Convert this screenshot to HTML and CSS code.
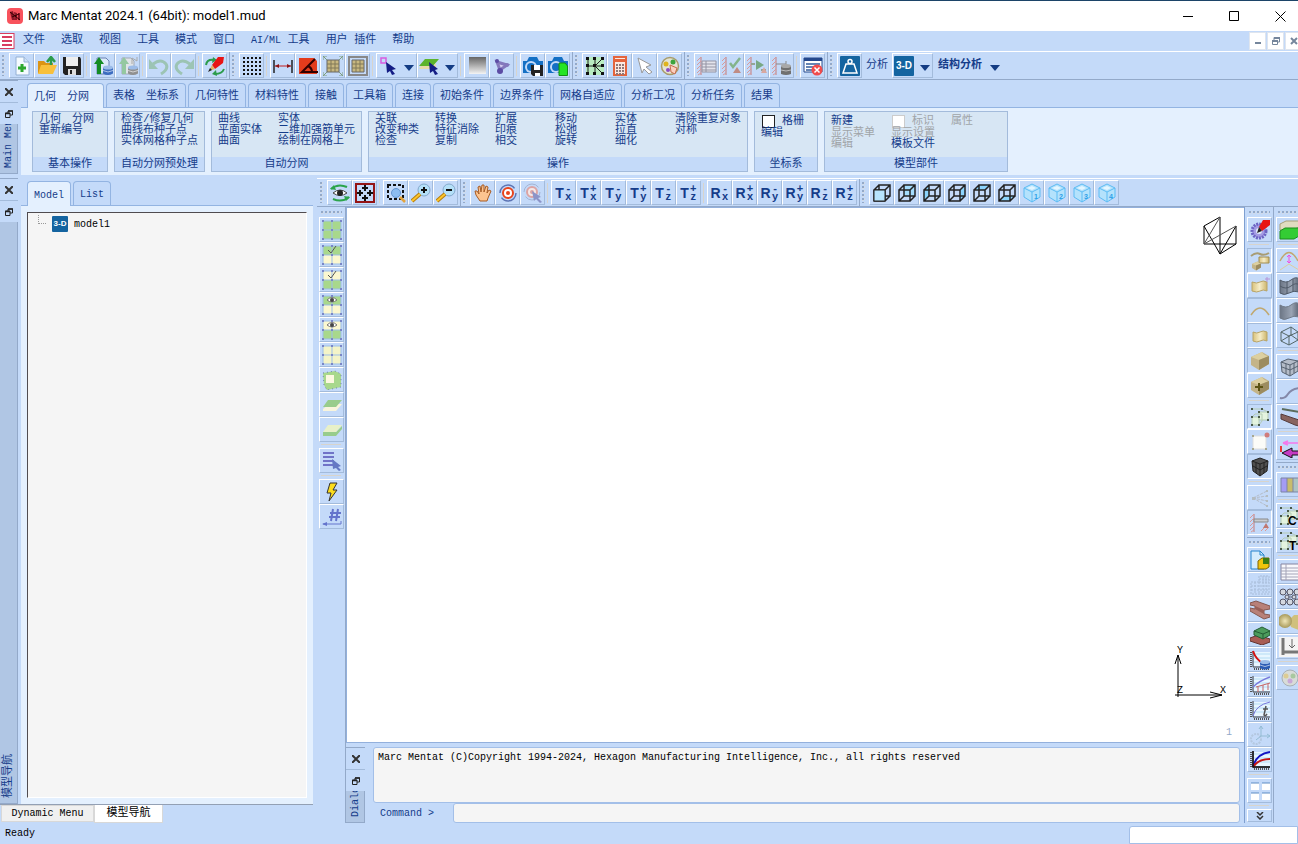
FILE: index.html
```
<!DOCTYPE html>
<html lang="zh-CN">
<head>
    <meta charset="UTF-8">
    <meta name="viewport" content="width=device-width, initial-scale=1.0">
    <title>Marc Mentat 2024.1 (64bit): model1.mud</title>
    <link rel="stylesheet" href="styles.css">
</head>
<body>
    <!-- shared icon shapes -->
    <svg class="defs" aria-hidden="true">
        <defs>
            <linearGradient id="g-grey" x1="0" y1="0" x2="0" y2="1"><stop offset="0" stop-color="#666"/><stop offset="1" stop-color="#f4f4f4"/></linearGradient>
            <linearGradient id="g-tan" x1="0" y1="0" x2="1" y2="0"><stop offset="0" stop-color="#d9c27c"/><stop offset=".5" stop-color="#f6edc8"/><stop offset="1" stop-color="#cdb56c"/></linearGradient>
            <linearGradient id="g-steel" x1="0" y1="0" x2="1" y2="0"><stop offset="0" stop-color="#6c7686"/><stop offset=".6" stop-color="#9aa4b4"/><stop offset="1" stop-color="#5c6676"/></linearGradient>
            <radialGradient id="g-ball"><stop offset="0" stop-color="#f0e6b8"/><stop offset="1" stop-color="#a89a5c"/></radialGradient>
        </defs>
        <symbol id="nodes" viewBox="0 0 20 20">
            <path d="M1 1H19V19H1ZM10 1V19M1 10H19" fill="none" stroke="#9dbfe6"/>
            <path d="M0 0h2v2H0zM9 0h2v2H9zM18 0h2v2h-2zM0 9h2v2H0zM9 9h2v2H9zM18 9h2v2h-2zM0 18h2v2H0zM9 18h2v2H9zM18 18h2v2h-2z" fill="#7a86c6"/>
        </symbol>
        <symbol id="eye" viewBox="0 0 20 20">
            <path d="M5 5Q10 0 15 5Q10 9 5 5Z" fill="#fff" stroke="#777"/><circle cx="10" cy="5" r="2" fill="#444"/>
        </symbol>
        <symbol id="cube-wire" viewBox="0 0 20 20">
            <path d="M2 7H13V18H2ZM7 2H18V13H7ZM2 7L7 2M13 7L18 2M13 18L18 13M2 18L7 13" fill="none" stroke="#222" stroke-width="1.500"/>
        </symbol>
        <symbol id="cube-ice" viewBox="0 0 20 20">
            <path d="M10 1L18 5V14L10 19L2 14V5Z" fill="#b4e2fc" stroke="#5cbcf4"/>
            <path d="M2 5L10 9L18 5M10 9V19" fill="none" stroke="#5cbcf4"/><path d="M5 5L10 3L14 5L10 7Z" fill="#e4f6ff"/>
        </symbol>
        <symbol id="axes" viewBox="0 0 20 20">
            <path d="M4 2H20V16H4Z" fill="#e8f6ff"/><path d="M4 4H20M4 8H20M4 12H20" stroke="#b4dcf4"/>
            <path d="M1 2V17M4 19H20" stroke="#555" stroke-width="2" stroke-dasharray="1 1"/><path d="M3 1V17H20" fill="none" stroke="#444"/>
        </symbol>
        <symbol id="wall" viewBox="0 0 20 20">
            <path d="M4 1V19" stroke="#c47c7c"/><path d="M0 5L4 1M0 9L4 5M0 13L4 9M0 17L4 13M1 19L4 17" stroke="#d89a9a"/>
        </symbol>
        <symbol id="cells" viewBox="0 0 20 20">
            <path d="M9 5H18V13H9ZM2 10H9V18H2Z" fill="#e4f4e0" stroke="#b4ccb4"/>
            <path d="M2 2H12M12 2L18 5M2 10L5 7H12V14L9 18" fill="none" stroke="#b4ccb4"/>
            <path d="M1 1h2v2H1zM11 1h2v2h-2zM17 4h2v2h-2zM8 4h2v2H8zM17 12h2v2h-2zM1 9h2v2H1zM8 9h2v2H8zM1 17h2v2H1zM8 17h2v2H8z" fill="#4a5a4a"/>
        </symbol>
        <symbol id="down" viewBox="0 0 10 6"><path d="M0 0H10L5 6Z" fill="#143c84"/></symbol>
        <symbol id="cross" viewBox="0 0 8 8"><path d="M0 0L8 8M8 0L0 8" stroke="#333" stroke-width="2"/></symbol>
        <symbol id="float" viewBox="0 0 8 8"><path d="M3 3V1H7.500V5H5M.5 3H5V7.500H.5Z" fill="none" stroke="#222"/><path d="M3 1H8M0 3.500H5" stroke="#222" stroke-width="1.500"/></symbol>
        <symbol id="cylinder" viewBox="0 0 10 10"><path d="M0 2V8Q5 11 10 8V2Z" fill="currentColor"/><ellipse cx="5" cy="2" rx="5" ry="2" fill="#9cbce8"/><path d="M0 5Q5 8 10 5" fill="none" stroke="#fff" stroke-opacity=".6"/></symbol>
        <symbol id="block" viewBox="0 0 20 20">
            <path d="M1 6L12 1L19 5V13L9 19L1 14Z" fill="#c4b488"/><path d="M1 6L12 1Q14 5 19 5L9 9Z" fill="#dccfa0"/><path d="M9 9V19L19 13V5Z" fill="#9c8c60"/>
        </symbol>
    </svg>

    <header class="titlebar">
        <svg class="app-logo" viewBox="0 0 16 16"><rect width="16" height="16" rx="4" fill="#f8525c"/><path d="M3 4L6 3L8 12L5 12ZM7 4L10 5L10 12L8 12ZM11 5L13 5L13 12L11 12Z" fill="#8c1828"/><path d="M3 4L13 12M5 9L12 6" stroke="#300"/></svg>
        <h1>Marc Mentat 2024.1 (64bit): model1.mud</h1>
        <div class="window-buttons">
            <button aria-label="Minimize"><svg viewBox="0 0 11 11"><path d="M0 5.500H10" stroke="#000"/></svg></button>
            <button aria-label="Maximize"><svg viewBox="0 0 11 11"><path d="M.5 .5H9.500V9.500H.5Z" fill="none" stroke="#000"/></svg></button>
            <button aria-label="Close"><svg viewBox="0 0 11 11"><path d="M.5 .5L10.500 10.500M10.500 .5L.5 10.500" stroke="#000"/></svg></button>
        </div>
    </header>

    <nav class="menubar">
        <svg class="menu-logo" viewBox="0 0 15 16"><rect x="-1" y=".5" width="15" height="15" fill="#fff" stroke="#d83c60"/><path d="M2 4H12M2 8H12M2 12H12" stroke="#d83c60" stroke-width="2"/></svg>
        <button>文件</button>
        <button>选取</button>
        <button>视图</button>
        <button>工具</button>
        <button>模式</button>
        <button>窗口</button>
        <button><span class="latin">AI/ML</span> 工具</button>
        <button>用户 插件</button>
        <button>帮助</button>
        <div class="mdi-buttons">
            <button aria-label="Minimize view"><svg viewBox="0 0 8 8"><path d="M1 6H7" stroke="#75869c" stroke-width="2"/></svg></button>
            <button aria-label="Restore view"><svg viewBox="0 0 8 8"><path d="M2 3V.5H7.500V5H6M.5 4H5.500V7.500H.5Z" fill="none" stroke="#75869c"/><path d="M2 1H8M0 4H6" stroke="#75869c" stroke-width="2"/></svg></button>
            <button aria-label="Close view"><svg viewBox="0 0 8 8"><path d="M1 1L7 7M7 1L1 7" stroke="#75869c" stroke-width="2"/></svg></button>
        </div>
    </nav>

    <div class="toolbar">
        <div class="tools">
            <button class="tool" aria-label="New"><svg viewBox="0 0 20 20"><path d="M4 1H12L17 6V19H4Z" fill="#f4faff" stroke="#94b0d4"/><path d="M12 1V6H17" fill="#cfe0f4" stroke="#94b0d4"/><path d="M10 8V16M6 12H14" stroke="#2ea82e" stroke-width="3"/></svg></button>
            <button class="tool" aria-label="Open"><svg viewBox="0 0 20 20"><path d="M1 5H7L9 7H16V17H1Z" fill="#dc9414"/><path d="M4 9H20L16 18H1Z" fill="#f8c03c"/><path d="M14 9V2M10 6L14 1L18 6" fill="none" stroke="#2c9c4c" stroke-width="2.500"/></svg></button>
            <button class="tool" aria-label="Save"><svg viewBox="0 0 20 20"><path d="M1 1H18L19 3V19H3L1 17Z" fill="#222"/><path d="M4 1H16V10H4Z" fill="#eee"/><path d="M6 13H14V19H6Z" fill="#ddd"/><path d="M8 14H10V18H8Z" fill="#222"/></svg></button>
            <span class="sep"></span>
            <button class="tool" aria-label="Import"><svg viewBox="0 0 20 20"><path d="M4 2H13L16 5V18H4Z" fill="#dceafa" stroke="#6c84b4"/><path d="M1 8L6 1L11 8H8V18H4V8Z" fill="#148c24"/><use href="#cylinder" x="10" y="9" width="10" height="11" color="#3c6cc0"/></svg></button>
            <button class="tool" aria-label="Export"><svg viewBox="0 0 20 20"><path d="M4 2H13L16 5V18H4Z" fill="#e0e4e8" stroke="#a0a8b4"/><path d="M1 8L6 1L11 8H8V18H4V8Z" fill="#94c8a0"/><path d="M14 8V2L19 5V1" fill="none" stroke="#aaa"/><use href="#cylinder" x="10" y="9" width="10" height="11" color="#909090"/></svg></button>
            <span class="sep"></span>
            <button class="tool" aria-label="Undo"><svg viewBox="0 0 20 20"><path d="M4 8Q12 2 17 8Q20 13 12 18" fill="none" stroke="#9cc4b4" stroke-width="3"/><path d="M0 3V13H9Z" fill="#9cc4b4"/></svg></button>
            <button class="tool" aria-label="Redo"><svg viewBox="0 0 20 20"><path d="M16 8Q8 2 3 8Q0 13 8 18" fill="none" stroke="#9cc4b4" stroke-width="3"/><path d="M20 3V13H11Z" fill="#9cc4b4"/></svg></button>
            <span class="sep"></span>
            <button class="tool" aria-label="Redraw"><svg viewBox="0 0 20 20"><path d="M1 9Q2 3 9 4M19 13Q17 18 10 18" fill="none" stroke="#2c9c4c" stroke-width="2"/><path d="M8 1L12 4L7 7ZM11 14L7 18L12 20Z" fill="#2c9c4c"/><path d="M13 1L19 1L18 7L10 13L7 9Z" fill="#e81414"/><path d="M7 9L10 13L4 15Z" fill="#e4b060"/><path d="M5 12L7 14L3 16Z" fill="#222"/></svg></button>
        </div>
        <div class="tools">
            <button class="tool" aria-label="Grid"><svg viewBox="0 0 20 20"><path d="M1 2H20M1 6H20M1 10H20M1 14H20M1 18H20" stroke="#111" stroke-width="2" stroke-dasharray="2 2"/></svg></button>
            <span class="sep"></span>
            <button class="tool" aria-label="Distance"><svg viewBox="0 0 20 20"><path d="M1 4V17M19 4V17" stroke="#222" stroke-width="1.500"/><path d="M2 10H18" stroke="#c41c1c"/><path d="M2 10L6 8V12ZM18 10L14 8V12Z" fill="#8c1414"/></svg></button>
            <button class="tool" aria-label="Angle"><svg viewBox="0 0 20 20"><path d="M1 2H16L19 5V18H1Z" fill="#e43c1c"/><path d="M17 3L4 16H20" fill="none" stroke="#300" stroke-width="2"/><path d="M10 10Q14 12 14 16" fill="none" stroke="#300" stroke-width="2"/></svg></button>
            <button class="tool" aria-label="Fill view"><svg viewBox="0 0 20 20"><path d="M4 4H16V16H4Z" fill="#c8b880" stroke="#666"/><path d="M8 4V16M12 4V16M4 8H16M4 12H16" stroke="#807858"/><path d="M0 4V0H4M0 0L4 4M16 0H20V4M20 0L16 4M0 16V20H4M0 20L4 16M20 16V20H16M20 20L16 16" fill="none" stroke="#7c9c7c"/></svg></button>
            <button class="tool" aria-label="Fit view"><svg viewBox="0 0 20 20"><path d="M1 1H19V19H1Z" fill="none" stroke="#888" stroke-width="2"/><path d="M4 4H16V16H4Z" fill="#c8b880" stroke="#666"/><path d="M8 4V16M12 4V16M4 8H16M4 12H16" stroke="#807858"/></svg></button>
            <span class="sep"></span>
            <button class="tool drop" aria-label="Pick nodes"><svg viewBox="0 0 20 20"><path d="M3 2H8V7H3Z" fill="none" stroke="#d85ce0" stroke-width="1.500"/><path d="M8 6L18 13L14 14L17 18L14 19L12 15L9 17Z" fill="#141c84"/></svg><svg class="arrow"><use href="#down"/></svg></button>
            <button class="tool drop" aria-label="Pick faces"><svg viewBox="0 0 20 20"><path d="M6 3H20L14 10H0Z" fill="#5cb42c"/><path d="M0 13L2 10H14L17 7V11L14 13Z" fill="#e8dca8"/><path d="M10 6L19 13L16 14L19 18L16 19L14 15L11 17Z" fill="#141c84"/></svg><svg class="arrow"><use href="#down"/></svg></button>
            <span class="sep"></span>
            <button class="tool" aria-label="Background"><svg viewBox="0 0 20 20"><path d="M2 1H19V18H2Z" fill="url(#g-grey)"/></svg></button>
            <button class="tool" aria-label="Nodes"><svg viewBox="0 0 20 20"><path d="M5 6L15 9L8 14Z" fill="#d4ccf0" stroke="#8478bc" stroke-width="3"/><circle cx="5" cy="5" r="2" fill="#5c4ca4"/><circle cx="15" cy="9" r="2" fill="#8478bc"/><circle cx="8" cy="15" r="3" fill="#5c4ca4"/></svg></button>
            <span class="sep"></span>
            <button class="tool" aria-label="Snapshot save"><svg viewBox="0 0 20 20"><path d="M0 5H4L6 1H14L16 5H20V17H0Z" fill="#1470c4"/><circle cx="8" cy="11" r="6" fill="#c4daf9"/><circle cx="8" cy="11" r="4" fill="#1470c4"/><path d="M8 9H20V20H10L8 18Z" fill="#222"/><path d="M11 9H17V14H11ZM12 17H17V20H12Z" fill="#fff"/></svg></button>
            <button class="tool" aria-label="Snapshot copy"><svg viewBox="0 0 20 20"><path d="M0 5H4L6 1H14L16 5H20V17H0Z" fill="#1470c4"/><circle cx="8" cy="11" r="6" fill="#c4daf9"/><circle cx="8" cy="11" r="4" fill="#1470c4"/><path d="M11 7H17L19.500 10V19.500H11Z" fill="#24e424" stroke="#148c14"/></svg></button>
        </div>
        <div class="tools">
            <button class="tool" aria-label="Node paths"><svg viewBox="0 0 20 20"><path d="M1 1H19V19H1Z" fill="#b8ecc0"/><path d="M3 3V17M3 10H17M10 10L17 3M10 10L17 17M10 3V17" fill="none" stroke="#222"/><path d="M1 1h3v3H1zM8 1h3v3H8zM16 1h3v3h-3zM1 8h3v3H1zM8 8h3v3H8zM16 8h3v3h-3zM1 16h3v3H1zM8 16h3v3H8zM16 16h3v3h-3z" fill="#111"/></svg></button>
            <button class="tool" aria-label="Calculator"><svg viewBox="0 0 20 20"><path d="M4 1H16V19H4Z" fill="#fbe8e0" stroke="#e4643c" stroke-width="2"/><path d="M5 3H15V6H5Z" fill="#e4643c"/><path d="M6 9H15M6 12H15M6 15H15M6 18H15" stroke="#907878" stroke-width="2" stroke-dasharray="2 1"/></svg></button>
            <button class="tool" aria-label="Pointer"><svg viewBox="0 0 20 20"><path d="M3 2L16 9L11 11L17 16L14 18L9 13L7 17Z" fill="#fff" stroke="#999"/></svg></button>
            <button class="tool" aria-label="Colors"><svg viewBox="0 0 20 20"><circle cx="10" cy="10" r="8.500" fill="#e4e4d4" stroke="#a89c6c" stroke-width="1.500"/><circle cx="6" cy="8" r="2.500" fill="#e0b41c"/><circle cx="13" cy="6" r="2.500" fill="#3ca43c"/><circle cx="8" cy="14" r="2" fill="#8c4cc4"/><path d="M10 9L17 12L15 18L11 16Z" fill="#fcd0c0" stroke="#c46c4c"/></svg></button>
        </div>
        <div class="tools">
            <button class="tool" aria-label="Jobs"><svg viewBox="0 0 20 20"><use href="#wall"/><path d="M5 5H19V16H5Z" fill="#e4e4ec" stroke="#9494a4"/><path d="M5 8H19M5 11H19M5 14H19M9 5V16" stroke="#9494a4"/></svg></button>
            <button class="tool" aria-label="Check job"><svg viewBox="0 0 20 20"><use href="#wall"/><path d="M8 7L11 11L18 2" fill="none" stroke="#84b48c" stroke-width="2.500"/><path d="M11 17L15 11L19 17Z" fill="#c08c84"/></svg></button>
            <button class="tool" aria-label="Run job"><svg viewBox="0 0 20 20"><use href="#wall"/><path d="M4 8H8M14 14H19" stroke="#94a494" stroke-width="2"/><path d="M9 4L17 9L9 14Z" fill="#78a884"/><path d="M14 17L17 11L20 17Z" fill="#d8a8a0"/></svg></button>
            <button class="tool" aria-label="Job results"><svg viewBox="0 0 20 20"><use href="#wall"/><path d="M4 8H14V5" fill="none" stroke="#888"/><path d="M9 10V18Q14 20 19 18V10Z" fill="#707070"/><ellipse cx="14" cy="10" rx="5" ry="2" fill="#a8a8a8"/><path d="M9 14Q14 16 19 14" fill="none" stroke="#bbb"/></svg></button>
            <span class="sep"></span>
            <button class="tool" aria-label="Close results"><svg viewBox="0 0 20 20"><path d="M1 2H19V16H1Z" fill="#fff" stroke="#24488c"/><path d="M1 2H19V5H1Z" fill="#24488c"/><path d="M3 8H17M3 11H11M3 14H11" stroke="#6484b4" stroke-width="2"/><circle cx="14" cy="14" r="5.500" fill="#f04c4c"/><path d="M11.500 11.500L16.500 16.500M16.500 11.500L11.500 16.500" stroke="#fff" stroke-width="1.500"/></svg></button>
        </div>
        <div class="tools last">
            <button class="tool" aria-label="Analysis"><svg viewBox="0 0 20 20"><rect width="20" height="20" rx="1" fill="#1464a0"/><path d="M6 8H14L17 17H3Z" fill="none" stroke="#fff" stroke-width="1.500"/><circle cx="10" cy="5.500" r="2" fill="none" stroke="#fff" stroke-width="1.500"/></svg></button>
            <span class="tool-label">分析</span>
            <button class="tool drop"><span class="dim">3-D</span><svg class="arrow"><use href="#down"/></svg></button>
            <button class="analysis">结构分析<svg class="arrow"><use href="#down"/></svg></button>
        </div>
    </div>

    <section class="ribbon-dock">
        <div class="strip">
            <button aria-label="Close menu"><svg><use href="#cross"/></svg></button>
            <button class="float" aria-label="Float menu"><svg><use href="#float"/></svg></button>
            <div class="strip-name"><span class="latin">Main Menu</span></div>
        </div>
        <div class="ribbon">
            <div class="tabs">
                <button class="tab wide active">几何&emsp;分网</button>
                <button class="tab">表格&emsp;坐标系</button>
                <button class="tab">几何特性</button>
                <button class="tab">材料特性</button>
                <button class="tab">接触</button>
                <button class="tab">工具箱</button>
                <button class="tab">连接</button>
                <button class="tab">初始条件</button>
                <button class="tab">边界条件</button>
                <button class="tab">网格自适应</button>
                <button class="tab">分析工况</button>
                <button class="tab">分析任务</button>
                <button class="tab">结果</button>
            </div>
            <div class="groups">
                <div class="group">
                    <div class="commands"><div><button>几何&emsp;分网</button><button>重新编号</button></div></div>
                    <h2>基本操作</h2>
                </div>
                <div class="group">
                    <div class="commands"><div><button>检查/修复几何</button><button>曲线布种子点</button><button>实体网格种子点</button></div></div>
                    <h2>自动分网预处理</h2>
                </div>
                <div class="group">
                    <div class="commands">
                        <div><button>曲线</button><button>平面实体</button><button>曲面</button></div>
                        <div><button>实体</button><button>二维加强筋单元</button><button>绘制在网格上</button></div>
                    </div>
                    <h2>自动分网</h2>
                </div>
                <div class="group">
                    <div class="commands">
                        <div><button>关联</button><button>改变种类</button><button>检查</button></div>
                        <div><button>转换</button><button>特征消除</button><button>复制</button></div>
                        <div><button>扩展</button><button>印痕</button><button>相交</button></div>
                        <div><button>移动</button><button>松弛</button><button>旋转</button></div>
                        <div><button>实体</button><button>拉直</button><button>细化</button></div>
                        <div><button>清除重复对象</button><button>对称</button></div>
                    </div>
                    <h2>操作</h2>
                </div>
                <div class="group narrow">
                    <div class="commands"><div><label><input type="checkbox">格栅</label><button>编辑</button></div></div>
                    <h2>坐标系</h2>
                </div>
                <div class="group">
                    <div class="commands">
                        <div><button class="first">新建</button><button disabled>显示菜单</button><button disabled>编辑</button></div>
                        <div><label class="off"><input type="checkbox" disabled>标识</label><button disabled>显示设置</button><button>模板文件</button></div>
                        <div><button class="first" disabled>属性</button></div>
                    </div>
                    <h2>模型部件</h2>
                </div>
            </div>
        </div>
    </section>

    <main class="work">
        <aside class="navigator">
            <div class="nav-body">
                <div class="strip">
                    <button aria-label="Close navigator"><svg><use href="#cross"/></svg></button>
                    <button class="float" aria-label="Float navigator"><svg><use href="#float"/></svg></button>
                    <div class="strip-name"><span>模型导航</span></div>
                </div>
                <div class="nav-panel">
                    <div class="tabs">
                        <button class="tab active latin">Model</button>
                        <button class="tab latin">List</button>
                    </div>
                    <div class="tree-frame">
                        <div class="tree latin">
                            <div class="tree-item"><span class="branch"></span><span class="dim small">3-D</span><span>model1</span></div>
                        </div>
                    </div>
                </div>
            </div>
            <div class="dock-tabs">
                <button class="latin">Dynamic Menu</button>
                <button class="active">模型导航</button>
            </div>
        </aside>

        <section class="model">
            <div class="toolbar view-toolbar">
                <div class="tools">
                    <button class="tool" aria-label="Refresh view"><svg viewBox="0 0 20 20"><path d="M1 6Q8 0 17 4M19 14Q12 20 3 16" fill="none" stroke="#2ca44c" stroke-width="2"/><path d="M4 2L0 6L6 7ZM16 18L20 14L14 13Z" fill="#2ca44c"/><path d="M3 10Q10 4 17 10Q10 15 3 10Z" fill="#fff" stroke="#444"/><circle cx="10" cy="10" r="3" fill="#222"/></svg></button>
                    <button class="tool" aria-label="Fill"><svg viewBox="0 0 20 20"><path d="M1 1H19V19H1Z" fill="#c4daf9" stroke="#941414" stroke-width="2"/><path d="M10 2V8M7 5H13M10 12V18M7 15H13M5 7V13M2 10H8M15 7V13M12 10H18" stroke="#111" stroke-width="2"/></svg></button>
                    <span class="sep"></span>
                    <button class="tool" aria-label="Zoom box"><svg viewBox="0 0 20 20"><path d="M2 2H17V16H2Z" fill="none" stroke="#111" stroke-width="2" stroke-dasharray="3 2"/><circle cx="10" cy="10" r="4.500" fill="#8cbcf0" stroke="#6494d0"/><path d="M14 14L19 19" stroke="#e4a43c" stroke-width="2.500"/></svg></button>
                    <button class="tool" aria-label="Zoom in"><svg viewBox="0 0 20 20"><circle cx="13" cy="7" r="6" fill="#b4e0f8" stroke="#84a8cc"/><path d="M9 11L1 18" stroke="#b47c0c" stroke-width="4"/><path d="M9 11L1 18" stroke="#fcc42c" stroke-width="2"/><path d="M13 4V10M10 7H16" stroke="#111" stroke-width="2"/></svg></button>
                    <button class="tool" aria-label="Zoom out"><svg viewBox="0 0 20 20"><circle cx="13" cy="7" r="6" fill="#b4e0f8" stroke="#84a8cc"/><path d="M9 11L1 18" stroke="#b47c0c" stroke-width="4"/><path d="M9 11L1 18" stroke="#fcc42c" stroke-width="2"/><path d="M10 7H16" stroke="#111" stroke-width="2"/></svg></button>
                </div>
                <div class="tools">
                    <button class="tool" aria-label="Pan"><svg viewBox="0 0 20 20"><path d="M7 18L3 12L2 8L4 8L6 11L5 4L7 3L8 9L9 2L11 2L11 9L13 3L15 4L14 10L16 7L18 8L15 15L14 18Z" fill="#fcc490" stroke="#a85c24"/></svg></button>
                    <button class="tool" aria-label="Rotate"><svg viewBox="0 0 20 20"><circle cx="10" cy="10" r="8" fill="none" stroke="#5c74b4" stroke-width="1.500" stroke-dasharray="20 5"/><circle cx="10" cy="10" r="5" fill="#fff" stroke="#e8441c" stroke-width="2"/><circle cx="10" cy="10" r="2" fill="#e8441c"/></svg></button>
                    <button class="tool" aria-label="Rotate center"><svg viewBox="0 0 20 20"><circle cx="9" cy="9" r="8" fill="none" stroke="#a4b4d4" stroke-dasharray="20 5"/><circle cx="9" cy="9" r="5" fill="#f4e8e8" stroke="#dca4a4" stroke-width="2"/><circle cx="9" cy="9" r="2" fill="#dca4a4"/><path d="M9 8L18 14L15 15L19 19L17 20L13 16L11 18Z" fill="#8c94c8"/></svg></button>
                    <span class="sep"></span>
                    <button class="tool axis">T<span><sup>-</sup><sub>x</sub></span></button>
                    <button class="tool axis">T<span><sup>+</sup><sub>x</sub></span></button>
                    <button class="tool axis">T<span><sup>-</sup><sub>y</sub></span></button>
                    <button class="tool axis">T<span><sup>+</sup><sub>y</sub></span></button>
                    <button class="tool axis">T<span><sup>-</sup><sub>z</sub></span></button>
                    <button class="tool axis">T<span><sup>+</sup><sub>z</sub></span></button>
                    <span class="sep"></span>
                    <button class="tool axis">R<span><sup>-</sup><sub>x</sub></span></button>
                    <button class="tool axis">R<span><sup>+</sup><sub>x</sub></span></button>
                    <button class="tool axis">R<span><sup>-</sup><sub>y</sub></span></button>
                    <button class="tool axis">R<span><sup>+</sup><sub>y</sub></span></button>
                    <button class="tool axis">R<span><sup>-</sup><sub>z</sub></span></button>
                    <button class="tool axis">R<span><sup>+</sup><sub>z</sub></span></button>
                </div>
                <div class="tools last">
                    <button class="tool" aria-label="Front"><svg viewBox="0 0 20 20"><use href="#cube-wire"/><path d="M2 7H13V18H2Z" fill="#b8e4fc" stroke="#222"/></svg></button>
                    <button class="tool" aria-label="Back"><svg viewBox="0 0 20 20"><path d="M7 2H18V13H7Z" fill="#a4dcfc"/><use href="#cube-wire"/></svg></button>
                    <button class="tool" aria-label="Left"><svg viewBox="0 0 20 20"><path d="M2 7L7 2V13L2 18Z" fill="#8cd4fc"/><use href="#cube-wire"/></svg></button>
                    <button class="tool" aria-label="Right"><svg viewBox="0 0 20 20"><path d="M13 7L18 2V13L13 18Z" fill="#8cd4fc"/><use href="#cube-wire"/></svg></button>
                    <button class="tool" aria-label="Top"><svg viewBox="0 0 20 20"><path d="M2 7L7 2H18L13 7Z" fill="#8cd4fc"/><use href="#cube-wire"/></svg></button>
                    <button class="tool" aria-label="Bottom"><svg viewBox="0 0 20 20"><path d="M2 18L7 13H18L13 18Z" fill="#8cd4fc"/><use href="#cube-wire"/></svg></button>
                    <button class="tool" aria-label="View 1"><svg viewBox="0 0 20 20"><use href="#cube-ice"/><text x="12" y="16">1</text></svg></button>
                    <button class="tool" aria-label="View 2"><svg viewBox="0 0 20 20"><use href="#cube-ice"/><text x="12" y="16">2</text></svg></button>
                    <button class="tool" aria-label="View 3"><svg viewBox="0 0 20 20"><use href="#cube-ice"/><text x="12" y="16">3</text></svg></button>
                    <button class="tool" aria-label="View 4"><svg viewBox="0 0 20 20"><use href="#cube-ice"/><text x="12" y="16">4</text></svg></button>
                </div>
            </div>

            <div class="stage">
                <div class="column select-tools">
                    <div class="vtools">
                        <button class="tool" aria-label="Select all"><svg viewBox="0 0 20 20"><path d="M1 1H19V19H1Z" fill="#a8d88c"/><use href="#nodes"/></svg></button>
                        <button class="tool" aria-label="Select visible"><svg viewBox="0 0 20 20"><path d="M1 1H19V10H1Z" fill="#a8d88c"/><path d="M1 10H19V19H1Z" fill="#fcf8d0"/><use href="#nodes"/><path d="M6 5L9 8L14 1" fill="none" stroke="#555"/></svg></button>
                        <button class="tool" aria-label="Select rest"><svg viewBox="0 0 20 20"><path d="M1 1H19V10H1Z" fill="#fcf8d0"/><path d="M1 10H19V19H1Z" fill="#a8d88c"/><use href="#nodes"/><path d="M6 5L9 8L14 1" fill="none" stroke="#555"/></svg></button>
                        <button class="tool" aria-label="Show selected"><svg viewBox="0 0 20 20"><path d="M1 1H19V10H1Z" fill="#a8d88c"/><path d="M1 10H19V19H1Z" fill="#fcf8d0"/><use href="#nodes"/><use href="#eye"/></svg></button>
                        <button class="tool" aria-label="Show rest"><svg viewBox="0 0 20 20"><path d="M1 1H19V10H1Z" fill="#fcf8d0"/><path d="M1 10H19V19H1Z" fill="#a8d88c"/><use href="#nodes"/><use href="#eye"/></svg></button>
                        <button class="tool" aria-label="Clear selection"><svg viewBox="0 0 20 20"><path d="M1 1H19V19H1Z" fill="#f4f4c8"/><use href="#nodes"/></svg></button>
                        <button class="tool" aria-label="Select volume"><svg viewBox="0 0 20 20"><path d="M1 3L13 1L19 4V17L5 20L2 15Z" fill="#a8d88c" stroke="#7484b4" stroke-dasharray="1 3"/><path d="M4 5H12V13H4Z" fill="#fcf8e0"/></svg></button>
                        <button class="tool" aria-label="Select top face"><svg viewBox="0 0 20 20"><path d="M1 14L7 9H20L14 16H1Z" fill="#f8f4dc"/><path d="M6 5H20L14 12H1Z" fill="#98cc8c"/></svg></button>
                        <button class="tool" aria-label="Select bottom face"><svg viewBox="0 0 20 20"><path d="M1 12H14L20 6V9L14 16H1Z" fill="#98cc8c"/><path d="M6 5H20L14 12H1Z" fill="#e8f0c8"/></svg></button>
                        <span class="sep"></span>
                        <button class="tool" aria-label="Select from list"><svg viewBox="0 0 20 20"><path d="M1 2H12M1 6H12M1 10H12M1 14H12" stroke="#7074c8" stroke-width="2"/><path d="M10 8L19 15L16 16L19 19L17 20L14 17L11 18Z" fill="#6478c4"/></svg></button>
                        <span class="sep"></span>
                        <button class="tool" aria-label="Quick"><svg viewBox="0 0 20 20"><path d="M8 1H15L11 8H15L7 19L9 11H5Z" fill="#fcdc1c" stroke="#333"/></svg></button>
                        <button class="tool" aria-label="Renumber"><svg viewBox="0 0 20 20"><path d="M11 2L9 14M16 2L14 14M8 6H19M7 10H18" stroke="#6474cc" stroke-width="2"/><path d="M1 17H19V14" fill="none" stroke="#6474cc"/><path d="M0 17L5 15V19Z" fill="#6474cc"/></svg></button>
                    </div>
                </div>

                <div class="center">
                    <div class="viewport">
                        <svg class="orient" viewBox="0 0 34 40"><path d="M1 10L17 1V38L1 10V28H33V10L17 38L33 28" fill="none" stroke="#000"/><path d="M1 28L17 1M1 28L33 10" stroke="#555"/></svg>
                        <svg class="triad" viewBox="0 0 52 56"><path d="M4 10V52M1 50H48M4 10L1 19M4 10L7 19M48 50L36 47M48 50L36 53" fill="none" stroke="#000"/><text x="3" y="8">Y</text><text x="46" y="48">X</text><text x="3" y="48">Z</text></svg>
                        <span class="view-number latin">1</span>
                    </div>
                    <div class="dialog">
                        <div class="strip">
                            <button aria-label="Close dialog"><svg><use href="#cross"/></svg></button>
                            <button class="float" aria-label="Float dialog"><svg><use href="#float"/></svg></button>
                            <div class="strip-name"><span class="latin">Dialog</span></div>
                        </div>
                        <div class="dialog-body latin">
                            <div class="log">Marc Mentat (C)Copyright 1994-2024, Hexagon Manufacturing Intelligence, Inc., all rights reserved</div>
                            <div class="command">
                                <label for="command">Command &gt;</label>
                                <input type="text" id="command">
                            </div>
                        </div>
                    </div>
                </div>

                <div class="column">
                    <div class="vtools">
                        <button class="tool" aria-label="Plot settings"><svg viewBox="0 0 20 20"><circle cx="9" cy="11" r="7" fill="#a49ce4" stroke="#6c64c4" stroke-width="3" stroke-dasharray="2 1"/><circle cx="9" cy="11" r="3" fill="#e0ecfc"/><path d="M13 0H20V5L12 11L9 7Z" fill="#e81414"/><path d="M9 7L12 11L7 13Z" fill="#222"/></svg></button>
                        <span class="sep"></span>
                        <button class="tool on" aria-label="Geometry"><svg viewBox="0 0 20 20"><path d="M1 5Q6 1 10 3T19 2" fill="none" stroke="#a89c74" stroke-width="2"/><path d="M9 6H19V12H9Z" fill="url(#g-tan)" stroke="#a08c50"/><use href="#block" x="1" y="10" width="11" height="10"/></svg></button>
                        <button class="tool" aria-label="Surface labels"><svg viewBox="0 0 20 20"><path d="M2 6Q7 8 10 6T17 6V15Q13 13 10 15T2 15Z" fill="url(#g-tan)" stroke="#b8a468"/><path d="M17 1V6M15 3H20" stroke="#b494d8"/></svg></button>
                        <button class="tool on" aria-label="Curves"><svg viewBox="0 0 20 20"><path d="M1 14Q10 0 19 14" fill="none" stroke="#c0a870" stroke-width="1.500"/></svg></button>
                        <button class="tool on" aria-label="Surfaces"><svg viewBox="0 0 20 20"><path d="M3 6Q7 8 10 6T17 6V15Q13 13 10 15T3 15Z" fill="url(#g-tan)" stroke="#b8a468"/></svg></button>
                        <button class="tool on" aria-label="Solids"><svg viewBox="0 0 20 20"><use href="#block"/></svg></button>
                        <button class="tool" aria-label="Solid vertices"><svg viewBox="0 0 20 20"><use href="#block"/><path d="M9 7V15M5 11H13" stroke="#5c5414" stroke-width="2"/></svg></button>
                        <span class="sep"></span>
                        <button class="tool on" aria-label="Mesh"><svg viewBox="0 0 20 20"><use href="#cells"/></svg></button>
                        <button class="tool" aria-label="Element nodes"><svg viewBox="0 0 20 20"><path d="M3 4H16V17H3Z" fill="#fcfcf8" stroke="#ddd"/><path d="M2 3h2v2H2zM2 16h2v2H2zM15 16h2v2h-2z" fill="#a8a890"/><circle cx="17" cy="3" r="2.500" fill="#d07c7c"/></svg></button>
                        <button class="tool on" aria-label="Elements solid"><svg viewBox="0 0 20 20"><path d="M2 4L10 1L18 4L17 14L10 19L3 14Z" fill="#505050" stroke="#222"/><path d="M2 4L10 7L18 4M10 7V19M6 6V16M14 6V16M3 9L10 13L17 9" fill="none" stroke="#222"/></svg></button>
                        <span class="sep"></span>
                        <button class="tool" aria-label="Links"><svg viewBox="0 0 20 20"><path d="M3 10L17 3M3 10L17 8M3 10L17 13M3 10L17 18" stroke="#b4bcc8" stroke-dasharray="3 1"/><path d="M2 9h3v3H2zM16 2h2v2h-2zM16 7h2v2h-2zM16 12h2v2h-2zM16 17h2v2h-2z" fill="#b4bcc0"/></svg></button>
                        <button class="tool on" aria-label="Boundary conditions"><svg viewBox="0 0 20 20"><use href="#wall"/><path d="M4 6H18V9H4Z" fill="#c8ccd0" stroke="#888"/><path d="M13 15L16 10L19 15Z" fill="#c07870"/><path d="M11 18L14 15M15 18L18 15" stroke="#e09890"/></svg></button>
                    </div>
                    <div class="vtools last">
                        <button class="tool" aria-label="New results"><svg viewBox="0 0 20 20"><path d="M1 1H10L14 5V19H1Z" fill="#d4ecfc" stroke="#2484cc"/><path d="M10 1V5H14" fill="none" stroke="#2484cc"/><path d="M8 11L12 8H19V17L16 19H8Z" fill="#f0c40c" stroke="#806400"/><path d="M13 8H19V14H13Z" fill="#3c7c14"/></svg></button>
                        <button class="tool" aria-label="Grid plot"><svg viewBox="0 0 20 20"><path d="M1 7H9V1H19V19H1ZM5 7V19M9 7V19M13 1V19M16 1V19M9 4H19M1 11H19M1 15H19M9 7H19" fill="none" stroke="#a8bcd8" stroke-dasharray="2 1"/></svg></button>
                        <button class="tool" aria-label="Beam"><svg viewBox="0 0 20 20"><path d="M0 3L6 1L20 6V9L14 10V14L20 15V17L14 19L0 11V8L5 9V6L0 5Z" fill="#b88078" stroke="#845850"/><path d="M5 6L14 10V14L5 9Z" fill="#986058"/></svg></button>
                        <button class="tool" aria-label="Bodies"><svg viewBox="0 0 20 20"><path d="M0 13L8 10L20 14V17L12 20L0 16Z" fill="#a85c54" stroke="#643430"/><path d="M4 6L12 2L20 6V10L13 14L4 10Z" fill="#4c9c5c" stroke="#245c34"/><path d="M4 6L13 9L20 6M13 9V14" fill="none" stroke="#245c34"/></svg></button>
                        <button class="tool" aria-label="History file"><svg viewBox="0 0 20 20"><use href="#axes"/><path d="M3 1Q6 10 14 14" fill="none" stroke="#d41414" stroke-width="2"/><use href="#cylinder" x="10" y="10" width="10" height="10" color="#2c5cb4"/></svg></button>
                        <button class="tool" aria-label="Path plot"><svg viewBox="0 0 20 20"><use href="#axes"/><path d="M3 12Q9 6 20 2" fill="none" stroke="#7878dc" stroke-width="1.500"/><path d="M6 12L20 8M8 12V17M13 10V16M18 9V15" fill="none" stroke="#c46464"/></svg></button>
                        <button class="tool" aria-label="Time plot"><svg viewBox="0 0 20 20"><use href="#axes"/><path d="M3 16Q6 5 20 2" fill="none" stroke="#7878dc"/><path d="M16 6L14 15Q15 17 17 14M13 9H18" fill="none" stroke="#555" stroke-width="1.500"/></svg></button>
                        <button class="tool" aria-label="Gear axes"><svg viewBox="0 0 20 20"><circle cx="6" cy="14" r="5" fill="none" stroke="#b4c8e0" stroke-width="2" stroke-dasharray="2 1"/><path d="M11 1V11H20M11 11L6 15M9 4L11 1L13 4M17 9L20 11L17 13" fill="none" stroke="#94bcd4"/></svg></button>
                        <button class="tool" aria-label="Generalized plot"><svg viewBox="0 0 20 20"><use href="#axes"/><path d="M3 17Q6 4 20 2" fill="none" stroke="#1414c4" stroke-width="2"/><path d="M3 17Q8 9 20 9" fill="none" stroke="#c41414" stroke-width="2"/><path d="M3 1V17H20" fill="none" stroke="#111" stroke-width="1.500"/></svg></button>
                        <span class="sep"></span>
                        <button class="tool" aria-label="Tile views"><svg viewBox="0 0 20 20"><path d="M1 2H9V9H1ZM12 2H20V9H12ZM1 12H9V19H1ZM12 12H20V19H12Z" fill="#fff"/><path d="M1 2H9M12 2H20M1 12H9M12 12H20" stroke="#5c8cc4"/></svg></button>
                        <span class="sep"></span>
                        <button class="tool more" aria-label="More"><svg viewBox="0 0 8 8"><path d="M1 0L4 3L7 0M1 4L4 7L7 4" fill="none" stroke="#333" stroke-width="1.500"/></svg></button>
                    </div>
                </div>

                <div class="column edge">
                    <div class="vtools">
                        <button class="tool" aria-label="Solid layers"><svg viewBox="0 0 20 20"><path d="M1 4L7 1H20V7L14 10H1Z" fill="#e0dcc0" stroke="#a8a078"/><path d="M1 11L6 8H20V16L15 19H1Z" fill="#34cc34" stroke="#1c8c1c"/></svg></button>
                        <span class="sep"></span>
                        <button class="tool" aria-label="Offset curve"><svg viewBox="0 0 20 20"><path d="M1 10Q10-7 19 10" fill="none" stroke="#c0a870" stroke-width="1.500"/><path d="M1 19L10 13L20 19" fill="none" stroke="#dccca0"/><path d="M10 4V12M8 6L10 4L12 6M8 10L10 12L12 10" fill="none" stroke="#f04ce4"/></svg></button>
                        <button class="tool" aria-label="Surface grid"><svg viewBox="0 0 20 20"><path d="M1 4Q7 8 12 4T20 3V16Q15 14 10 17T1 17Z" fill="url(#g-steel)" stroke="#505a68"/><path d="M1 10Q7 14 12 10T20 9M8 6V18M14 3V16" fill="none" stroke="#505a68"/></svg></button>
                        <button class="tool" aria-label="Surface shaded"><svg viewBox="0 0 20 20"><path d="M1 4Q7 8 12 4T20 3V16Q15 14 10 17T1 17Z" fill="url(#g-steel)" stroke="#707a88"/></svg></button>
                        <button class="tool" aria-label="Wireframe"><svg viewBox="0 0 20 20"><path d="M2 6L12 1L19 6V14L10 19L2 15ZM2 6L10 10L19 6M10 10V19M2 15L12 9V1M12 9L19 14" fill="none" stroke="#566"/></svg></button>
                        <span class="sep"></span>
                        <button class="tool" aria-label="Mesh solid"><svg viewBox="0 0 20 20"><path d="M2 5L9 2L19 4V14L11 19L3 15Z" fill="#b4bcc8" stroke="#566270"/><path d="M2 5L11 8L19 4M11 8V19M7 7V17M15 6V16M3 10L11 13L19 9" fill="none" stroke="#566270"/></svg></button>
                        <button class="tool" aria-label="Line"><svg viewBox="0 0 20 20"><path d="M1 16Q6 17 9 12T20 6" fill="none" stroke="#8488a8" stroke-width="2"/></svg></button>
                        <button class="tool" aria-label="Beam section"><svg viewBox="0 0 20 20"><path d="M3 2L20 5" stroke="#5c6c5c" stroke-width="2"/><path d="M2 7L20 13V19L16 18L2 12Z" fill="#886460" stroke="#553c3c"/></svg></button>
                        <span class="sep"></span>
                        <button class="tool" aria-label="Vectors"><svg viewBox="0 0 20 20"><path d="M4 5L9 3M4 5L9 7M4 5H20" stroke="#f478ec" stroke-width="1.500"/><path d="M3 15L13 10V13H20V17H13V20Z" fill="#c43cc4" stroke="#111"/><path d="M2 8V14" stroke="#e43c3c" stroke-width="2"/></svg></button>
                    </div>
                    <div class="vtools last">
                        <button class="tool" aria-label="Color bands"><svg viewBox="0 0 20 20"><path d="M2 3H8V17H2Z" fill="#a49cf4"/><path d="M8 3H14V17H8Z" fill="#c8bc6c"/><path d="M14 3H20V17H14Z" fill="#acc4c4"/><path d="M2 3H20V17H2ZM8 3V17M14 3V17" fill="none" stroke="#7c84a4"/></svg></button>
                        <span class="sep"></span>
                        <button class="tool" aria-label="Cells C"><svg viewBox="0 0 20 20"><use href="#cells"/><text class="mark" x="9" y="19">C</text></svg></button>
                        <button class="tool" aria-label="Cells T"><svg viewBox="0 0 20 20"><use href="#cells"/><text class="mark" x="10" y="19">T</text></svg></button>
                        <span class="sep"></span>
                        <button class="tool" aria-label="Table"><svg viewBox="0 0 20 20"><path d="M2 2H20V18H2Z" fill="#f8f8fc" stroke="#8484a0"/><path d="M2 6H20M2 9H20M2 12H20M2 15H20M7 2V18" stroke="#a4a4b8"/></svg></button>
                        <button class="tool" aria-label="Springs"><svg viewBox="0 0 20 20"><path d="M4 5H18M4 15H18M7 10H15" stroke="#667"/><g fill="#d4d8e0" stroke="#556"><circle cx="4" cy="5" r="3"/><circle cx="11" cy="5" r="3"/><circle cx="18" cy="5" r="3"/><circle cx="4" cy="15" r="3"/><circle cx="11" cy="15" r="3"/><circle cx="18" cy="15" r="3"/><circle cx="8" cy="10" r="2"/><circle cx="15" cy="10" r="2"/></g></svg></button>
                        <button class="tool" aria-label="Shapes"><svg viewBox="0 0 20 20"><path d="M10 8L15 3H20V18L12 15Z" fill="#d0c07c"/><circle cx="6" cy="9" r="7" fill="url(#g-ball)"/></svg></button>
                        <button class="tool" aria-label="Gauge"><svg viewBox="0 0 20 20"><path d="M0 0H20V20H0Z" fill="#f4f4f4"/><path d="M4 1V18M4 15H20" stroke="#777" stroke-width="3"/><path d="M13 2V11M10 8L13 11L16 8" fill="none" stroke="#666"/></svg></button>
                        <span class="sep"></span>
                        <button class="tool" aria-label="Palette"><svg viewBox="0 0 20 20"><circle cx="11" cy="10" r="8" fill="#d8dcd8" stroke="#a8b0b4"/><circle cx="7" cy="8" r="2.500" fill="#dccc94"/><circle cx="14" cy="8" r="2.500" fill="#a8c8a0"/><circle cx="11" cy="13" r="2.500" fill="#c8a8d8"/></svg></button>
                    </div>
                </div>
            </div>
        </section>
    </main>

    <footer class="statusbar latin">
        <span>Ready</span>
        <input type="text" aria-label="Status">
    </footer>
</body>
</html>
```
FILE: styles.css
```
* {
    box-sizing: border-box;
}
body {
    margin: 0;
    height: 100vh;
    display: flex;
    flex-direction: column;
    overflow: hidden;
    background-color: #c4daf9;
    border-top: 1px solid #1c4468;
    color: #153c8a;
    font-family: "Liberation Mono", "Noto Sans CJK SC", monospace;
    font-size: 11px;
    line-height: 11px;
}
button {
    margin: 0;
    padding: 0;
    border: none;
    background: none;
    color: inherit;
    font: inherit;
    text-align: left;
    white-space: nowrap;
}
svg {
    display: block;
}
.defs {
    position: absolute;
    width: 0;
    height: 0;
}
.latin {
    font-size: 10px;
}

/* title and menu */
.titlebar {
    display: flex;
    align-items: center;
    flex: none;
    height: 30px;
    padding-left: 7px;
    background-color: white;
    color: black;
}
.titlebar h1 {
    margin: 0 auto 0 5px;
    font: 13px/18px Roboto, sans-serif;
}
.app-logo {
    width: 16px;
    height: 16px;
}
.window-buttons {
    display: flex;
}
.window-buttons button {
    width: 46px;
    height: 30px;
}
.window-buttons svg {
    width: 11px;
    height: 11px;
    margin: 0 12px 0 auto;
}
.menubar {
    display: flex;
    align-items: center;
    flex: none;
    height: 20px;
}
.menubar > button {
    height: 18px;
    padding: 0 8px 2px;
}
.menu-logo {
    width: 15px;
    height: 16px;
}
.mdi-buttons {
    display: flex;
    gap: 1px;
    width: 49px;
    height: 18px;
    margin-left: auto;
    overflow: hidden;
}
.mdi-buttons button {
    flex: none;
    width: 17px;
    border: 1px solid #dfe5ee;
    background-color: white;
}
.mdi-buttons svg {
    width: 8px;
    height: 8px;
    margin: auto;
}

/* tool bars */
.toolbar {
    display: flex;
    flex: none;
    height: 29px;
    border-top: 1px solid white;
    border-bottom: 1px solid #93a9c9;
}
.tools {
    display: flex;
    align-items: center;
    padding-right: 2px;
    border-right: 1px solid #93a9c9;
}
.tools.last {
    border-right: none;
}
.tools::before {
    content: "";
    width: 3px;
    height: 21px;
    margin: 0 4px 0 2px;
    background: radial-gradient(circle at 1px 1px, #93a9c9 1px, white 2px, transparent 2px) 0 0 / 3px 4px;
}
.tool {
    display: flex;
    align-items: center;
    justify-content: center;
    flex: none;
    width: 25px;
    height: 25px;
    border: 1px solid;
    border-color: white #a3bbdb #a3bbdb white;
}
.tool.on {
    border-color: #a3bbdb white white #a3bbdb;
}
.tool svg {
    width: 20px;
    height: 20px;
}
.tool text {
    fill: #2ca0e8;
    font: bold 7px "Liberation Sans", sans-serif;
}
.tool text.mark {
    fill: black;
    font-size: 12px;
}
.tool.drop {
    width: 41px;
    justify-content: flex-start;
    gap: 6px;
    padding-left: 1px;
}
.tool .arrow, .arrow {
    width: 10px;
    height: 6px;
    margin-top: 4px;
}
.sep {
    flex: none;
    width: 2px;
    height: 20px;
    margin: 0 2px;
    border-left: 1px solid #d8d4cc;
}
.tool-label {
    margin: 0 4px;
}
.dim {
    width: 20px;
    height: 20px;
    border-radius: 1px;
    background-color: #1464a0;
    color: white;
    font: bold 10px/20px "Liberation Sans", sans-serif;
    text-align: center;
}
.dim.small {
    width: 16px;
    height: 16px;
    font-size: 8px;
    line-height: 16px;
}
.analysis {
    display: flex;
    align-items: center;
    gap: 8px;
    padding-left: 5px;
    font-weight: bold;
}
.axis {
    gap: 1px;
    font: bold 14px/18px "Liberation Sans", sans-serif;
}
.axis span {
    display: flex;
    flex-direction: column;
    width: 7px;
    text-align: center;
}
.axis sup, .axis sub {
    font-size: 11px;
    line-height: 7px;
    vertical-align: baseline;
}
.axis sub {
    line-height: 9px;
}

/* dock strips */
.strip {
    display: flex;
    flex-direction: column;
    flex: none;
    width: 18px;
    border-top: 1px solid #93a9c9;
}
.strip button {
    display: flex;
    align-items: center;
    justify-content: center;
    flex: none;
    height: 22px;
    border-bottom: 1px solid #a3bbdb;
}
.strip button.float {
    height: 21px;
    border: none;
}
.strip button svg {
    width: 8px;
    height: 8px;
}
.strip-name {
    display: flex;
    align-items: center;
    flex: 1;
    min-height: 0;
    padding-top: 5px;
    overflow: hidden;
    border-left: 1px solid #93a9c9;
    border-top: 1px solid #93a9c9;
    background-color: #b0c6e4;
    writing-mode: vertical-rl;
    text-orientation: sideways;
    white-space: nowrap;
    transform: rotate(180deg);
}

/* ribbon */
.ribbon-dock {
    display: flex;
    gap: 3px;
    flex: none;
    height: 94px;
}
.ribbon {
    flex: 1;
    min-width: 0;
    display: flex;
    flex-direction: column;
}
.tabs {
    display: flex;
    align-items: flex-end;
    gap: 2px;
    flex: none;
    height: 28px;
    padding-left: 6px;
    border-bottom: 1px solid #93b4e2;
}
.tab {
    height: 24px;
    padding: 2px 6px 0;
    border: 1px solid #93b4e2;
    border-bottom: none;
    border-radius: 4px 4px 0 0;
}
.tab.active {
    height: 25px;
    margin-bottom: -1px;
    background-color: #e4f0fe;
}
.tab.wide {
    padding-right: 14px;
}
.groups {
    display: flex;
    gap: 6px;
    flex: 1;
    padding: 3px 11px;
    background-color: #e4f0fe;
}
.group {
    display: flex;
    flex-direction: column;
    min-width: 76px;
    height: 61px;
    border: 1px solid #a3bbdb;
    background-color: #d7e6f4;
}
.group.narrow {
    min-width: 64px;
}
.group h2 {
    margin: 0;
    padding-top: 1px;
    background-color: #c4daf9;
    font-size: 11px;
    font-weight: normal;
    line-height: 13px;
    text-align: center;
}
.commands {
    display: flex;
    flex: 1;
    padding: 2px 6px 0;
}
.commands > div {
    display: flex;
    flex-direction: column;
    align-items: flex-start;
    min-width: 60px;
}
.commands > div:last-child {
    min-width: 50px;
}
.commands button {
    height: 11px;
    line-height: 11px;
}
.commands label, .commands .first {
    display: flex;
    align-items: center;
    gap: 7px;
    height: 14px;
}
.commands input {
    appearance: none;
    width: 13px;
    height: 13px;
    margin: 0 0 0 1px;
    border: 1px solid #222;
    background-color: white;
}
.commands input:disabled {
    border-color: #ccc;
}
.commands button:disabled, .commands .off {
    color: #a0a4a8;
}

/* navigator */
.work {
    display: flex;
    flex: 1;
    min-height: 0;
    gap: 4px;
    padding-top: 4px;
}
.navigator {
    display: flex;
    flex-direction: column;
    flex: none;
    width: 313px;
}
.nav-body {
    display: flex;
    gap: 3px;
    flex: 1;
    min-height: 0;
    border-bottom: 1px solid #93a0b4;
}
.nav-panel {
    display: flex;
    flex-direction: column;
    flex: 1;
}
.tree-frame {
    display: flex;
    flex: 1;
    padding: 6px;
    background-color: #e4f0fe;
}
.tree {
    flex: 1;
    border: 1px solid;
    border-color: #504c50 white white #504c50;
    background-color: #f5f5f5;
    color: black;
}
.tree-item {
    display: flex;
    align-items: center;
    gap: 6px;
    padding: 2px 0 0 10px;
}
.branch {
    width: 8px;
    height: 9px;
    margin-bottom: 9px;
    border-left: 1px dotted #999;
    border-bottom: 1px dotted #999;
}
.dock-tabs {
    display: flex;
    flex: none;
    height: 18px;
    padding-left: 1px;
}
.dock-tabs button {
    width: 93px;
    height: 17px;
    border: 1px solid #d8d8d8;
    background-color: #f0f0f0;
    color: black;
    text-align: center;
}
.dock-tabs .active {
    width: 69px;
    height: 18px;
    border-top: none;
    background-color: white;
}

/* model area */
.model {
    display: flex;
    flex-direction: column;
    flex: 1;
    min-width: 0;
}
.view-toolbar .tools:first-child {
    padding-left: 1px;
}
.stage {
    display: flex;
    flex: 1;
    min-height: 0;
}
.column {
    display: flex;
    flex-direction: column;
    flex: none;
    width: 29px;
    padding-left: 2px;
    border-right: 1px solid #93a9c9;
}
.column.edge {
    width: 24px;
    overflow: hidden;
    border-right: none;
}
.vtools {
    display: flex;
    flex-direction: column;
    border-bottom: 1px solid #93a9c9;
    padding-bottom: 2px;
}
.vtools.last, .select-tools .vtools {
    border-bottom: none;
}
.vtools::before {
    content: "";
    flex: none;
    width: 21px;
    height: 3px;
    margin: 4px 2px 3px;
    background: radial-gradient(circle at 1px 1px, #93a9c9 1px, white 2px, transparent 2px) 0 0 / 4px 3px;
}
.vtools.last::before {
    margin-top: 3px;
}
.column .sep {
    width: 20px;
    height: 2px;
    margin: 2px;
    border-left: none;
    border-top: 1px solid #d8d4cc;
}
.tool.more {
    height: 13px;
}
.tool.more svg {
    width: 8px;
    height: 8px;
}
.center {
    display: flex;
    flex-direction: column;
    flex: 1;
    min-width: 0;
    border-right: 1px solid #7f9fd0;
}
.viewport {
    position: relative;
    flex: 1;
    border: 1px solid #93b0dc;
    border-right: none;
    background-color: white;
}
.orient {
    position: absolute;
    top: 8px;
    right: 7px;
    width: 34px;
    height: 40px;
}
.triad {
    position: absolute;
    right: 18px;
    bottom: 41px;
    width: 52px;
    height: 56px;
}
.triad text {
    fill: black;
    font: 10px "Liberation Mono", monospace;
}
.view-number {
    position: absolute;
    right: 12px;
    bottom: 4px;
    color: #93a9c9;
}
.dialog {
    display: flex;
    gap: 8px;
    flex: none;
    height: 80px;
    padding: 4px 4px 0 0;
}
.dialog .strip {
    width: 19px;
}
.dialog-body {
    display: flex;
    flex-direction: column;
    flex: 1;
    min-width: 0;
}
.log {
    flex: 1;
    padding: 4px;
    border: 1px solid #a3bfe8;
    border-radius: 3px;
    background-color: #f5f5f5;
    color: black;
}
.command {
    display: flex;
    align-items: center;
    flex: none;
    height: 20px;
}
.command label {
    width: 80px;
    padding-left: 7px;
}
.command input {
    flex: 1;
    height: 20px;
    border: 1px solid #a3bfe8;
    border-radius: 3px;
    background-color: #f5f5f5;
    font: inherit;
}

.statusbar {
    display: flex;
    align-items: center;
    justify-content: space-between;
    flex: none;
    height: 21px;
    padding-left: 5px;
    color: black;
}
.statusbar input {
    width: 169px;
    height: 18px;
    margin-top: 3px;
    border: 1px solid #a3bfe8;
    border-radius: 3px 0 0 0;
    background-color: white;
    font: inherit;
}
```
